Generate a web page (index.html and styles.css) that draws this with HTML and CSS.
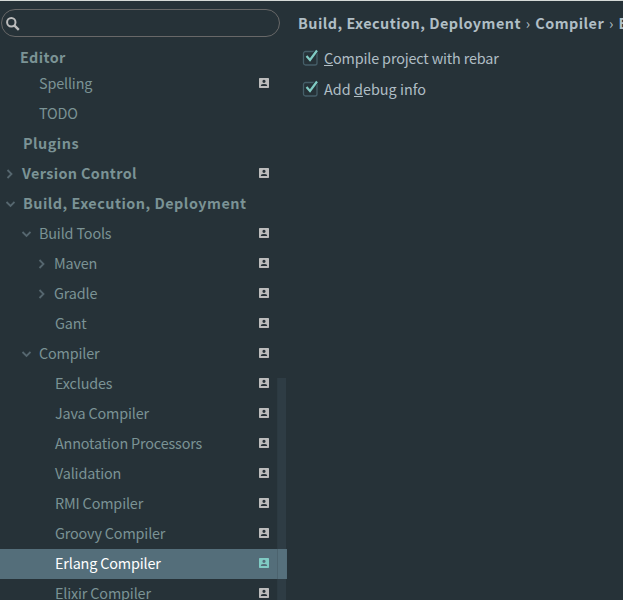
FILE: index.html
```
<!DOCTYPE html>
<html lang="en">
<head>
<meta charset="utf-8">
<title>Settings</title>
<link rel="stylesheet" href="styles.css">
</head>
<body>
<svg class="defs" aria-hidden="true">
  <symbol id="project" viewBox="0 0 10 10"><path fill="currentColor" fill-rule="evenodd" d="M.7 0h8.6q.7 0 .7.7v8.6q0 .7-.7.7H.7Q0 10 0 9.300V.7Q0 0 .7 0zM5 1.700a1.600 1.600 0 1 0 0 3.200a1.600 1.600 0 1 0 0-3.200zM1.900 8h6.200v-.7Q8 6 5 6T1.900 7.300z"/></symbol>
  <symbol id="right" viewBox="0 0 10 10"><path d="M3.500 1l4 4-4 4" fill="none" stroke="currentColor" stroke-width="1.800"/></symbol>
  <symbol id="down" viewBox="0 0 10 10"><path d="M1.500 3l4 4 4-4" fill="none" stroke="currentColor" stroke-width="1.800"/></symbol>
  <symbol id="check" viewBox="0 0 16 17"><rect x="1.500" y="2.500" width="13.500" height="13.500" rx="2" fill="none" stroke="#455e68" stroke-width="1.300"/><path d="M4 7.500l3.400 4L14.500 2" fill="none" stroke="#263238" stroke-width="4"/><path d="M4.500 7l3.500 4L15 1.500" fill="none" stroke="#80cbc4" stroke-width="2.200"/></symbol>
</svg>
<div class="window">
  <aside class="sidebar">
    <div class="search"><svg class="lens" viewBox="0 0 14 14"><circle cx="5.300" cy="5.300" r="4.200" fill="none" stroke="currentColor" stroke-width="2"/><path d="M8.300 8.300l4.500 4.500" stroke="currentColor" stroke-width="2.400"/></svg></div>
    <div class="sticky">Editor</div>
    <nav class="tree">
      <div class="row leaf1"><span>Spelling</span><svg class="badge"><use href="#project"/></svg></div>
      <div class="row leaf1"><span>TODO</span></div>
      <div class="row top"><span>Plugins</span></div>
      <div class="row top closed"><svg class="arrow"><use href="#right"/></svg><span>Version Control</span><svg class="badge"><use href="#project"/></svg></div>
      <div class="row top"><svg class="arrow"><use href="#down"/></svg><span>Build, Execution, Deployment</span></div>
      <div class="row level1"><svg class="arrow"><use href="#down"/></svg><span>Build Tools</span><svg class="badge"><use href="#project"/></svg></div>
      <div class="row level2"><svg class="arrow"><use href="#right"/></svg><span>Maven</span><svg class="badge"><use href="#project"/></svg></div>
      <div class="row level2"><svg class="arrow"><use href="#right"/></svg><span>Gradle</span><svg class="badge"><use href="#project"/></svg></div>
      <div class="row leaf2"><span>Gant</span><svg class="badge"><use href="#project"/></svg></div>
      <div class="row level1"><svg class="arrow"><use href="#down"/></svg><span>Compiler</span><svg class="badge"><use href="#project"/></svg></div>
      <div class="row leaf2"><span>Excludes</span><svg class="badge"><use href="#project"/></svg></div>
      <div class="row leaf2"><span>Java Compiler</span><svg class="badge"><use href="#project"/></svg></div>
      <div class="row leaf2"><span>Annotation Processors</span><svg class="badge"><use href="#project"/></svg></div>
      <div class="row leaf2"><span>Validation</span><svg class="badge"><use href="#project"/></svg></div>
      <div class="row leaf2"><span>RMI Compiler</span><svg class="badge"><use href="#project"/></svg></div>
      <div class="row leaf2"><span>Groovy Compiler</span><svg class="badge"><use href="#project"/></svg></div>
      <div class="row leaf2 selected"><span>Erlang Compiler</span><svg class="badge"><use href="#project"/></svg></div>
      <div class="row leaf2"><span>Elixir Compiler</span><svg class="badge"><use href="#project"/></svg></div>
    </nav>
    <div class="scrollbar"></div>
  </aside>
  <main class="content">
    <h1 class="crumbs">Build, Execution, Deployment <i>›</i> Compiler <i>›</i> Erlang Compiler</h1>
    <label class="option"><svg class="box"><use href="#check"/></svg><span><u>C</u>ompile project with rebar</span></label>
    <label class="option"><svg class="box"><use href="#check"/></svg><span class="debug">Add <u>d</u>ebug info</span></label>
  </main>
</div>
</body>
</html>
```
FILE: styles.css
```
* { box-sizing: border-box; }
body {
  margin: 0;
  overflow: hidden;
  background: #263238;
  color: #b0bec5;
  font: 14.4px/30px "Noto Sans CJK SC", "Noto Sans", sans-serif;
  letter-spacing: -.16px;
}
.defs { position: absolute; width: 0; height: 0; }
.window { display: flex; height: 600px; border-top: 1px solid #d5dad7; overflow: hidden; }
.sidebar { position: relative; flex: 0 0 287px; padding-top: 8px; color: #7b9395; }
.search {
  width: 279px; height: 28px; margin-left: 1px; padding: 7px 0 0 4px;
  border: 1px solid #686868; border-radius: 14px; color: #bdbdbd;
}
.lens { display: block; width: 14px; height: 14px; }
.sticky { height: 32px; padding: 5px 0 0 20px; font-weight: 700; letter-spacing: .4px; }
.row { display: flex; align-items: center; height: 30px; padding-right: 18px; padding-bottom: 2px; white-space: nowrap; }
.arrow { width: 10px; height: 10px; flex: none; margin-top: 1px; color: #56676f; }
.badge { width: 10px; height: 10px; flex: none; margin-left: auto; color: #bdbdbd; }
.top { padding-left: 23px; font-weight: 700; letter-spacing: .49px; }
.top .arrow { margin: 1px 8px 0 -18px; }
.closed { padding-left: 22px; letter-spacing: .36px; }
.leaf1 { padding-left: 39px; }
.level1 { padding-left: 21px; }
.level1 .arrow { margin-right: 8px; }
.level2 { padding-left: 36px; }
.level2 .arrow { margin-right: 8px; }
.leaf2 { padding-left: 55px; }
.selected { background: #546e7a; color: #fff; }
.selected .badge { color: #80cbc4; }
.scrollbar { position: absolute; left: 277px; top: 377px; width: 9px; bottom: 0; background: rgba(96, 125, 139, .14); border-left: 1px solid rgba(38, 50, 56, .2); }
.content { flex: 1; min-width: 0; padding: 7px 0 0 11px; }
.crumbs { margin: 0 0 4px; font-size: 14.4px; line-height: 30px; letter-spacing: .47px; white-space: nowrap; }
.crumbs i { font-style: normal; font-weight: 400; margin: 0 1px; }
.option { display: flex; align-items: center; height: 31px; padding-left: 4px; }
.box { width: 16px; height: 17px; margin-right: 6px; }
.debug { letter-spacing: .03px; }
.option u { text-underline-offset: 1px; text-decoration-thickness: 1px; }
```
